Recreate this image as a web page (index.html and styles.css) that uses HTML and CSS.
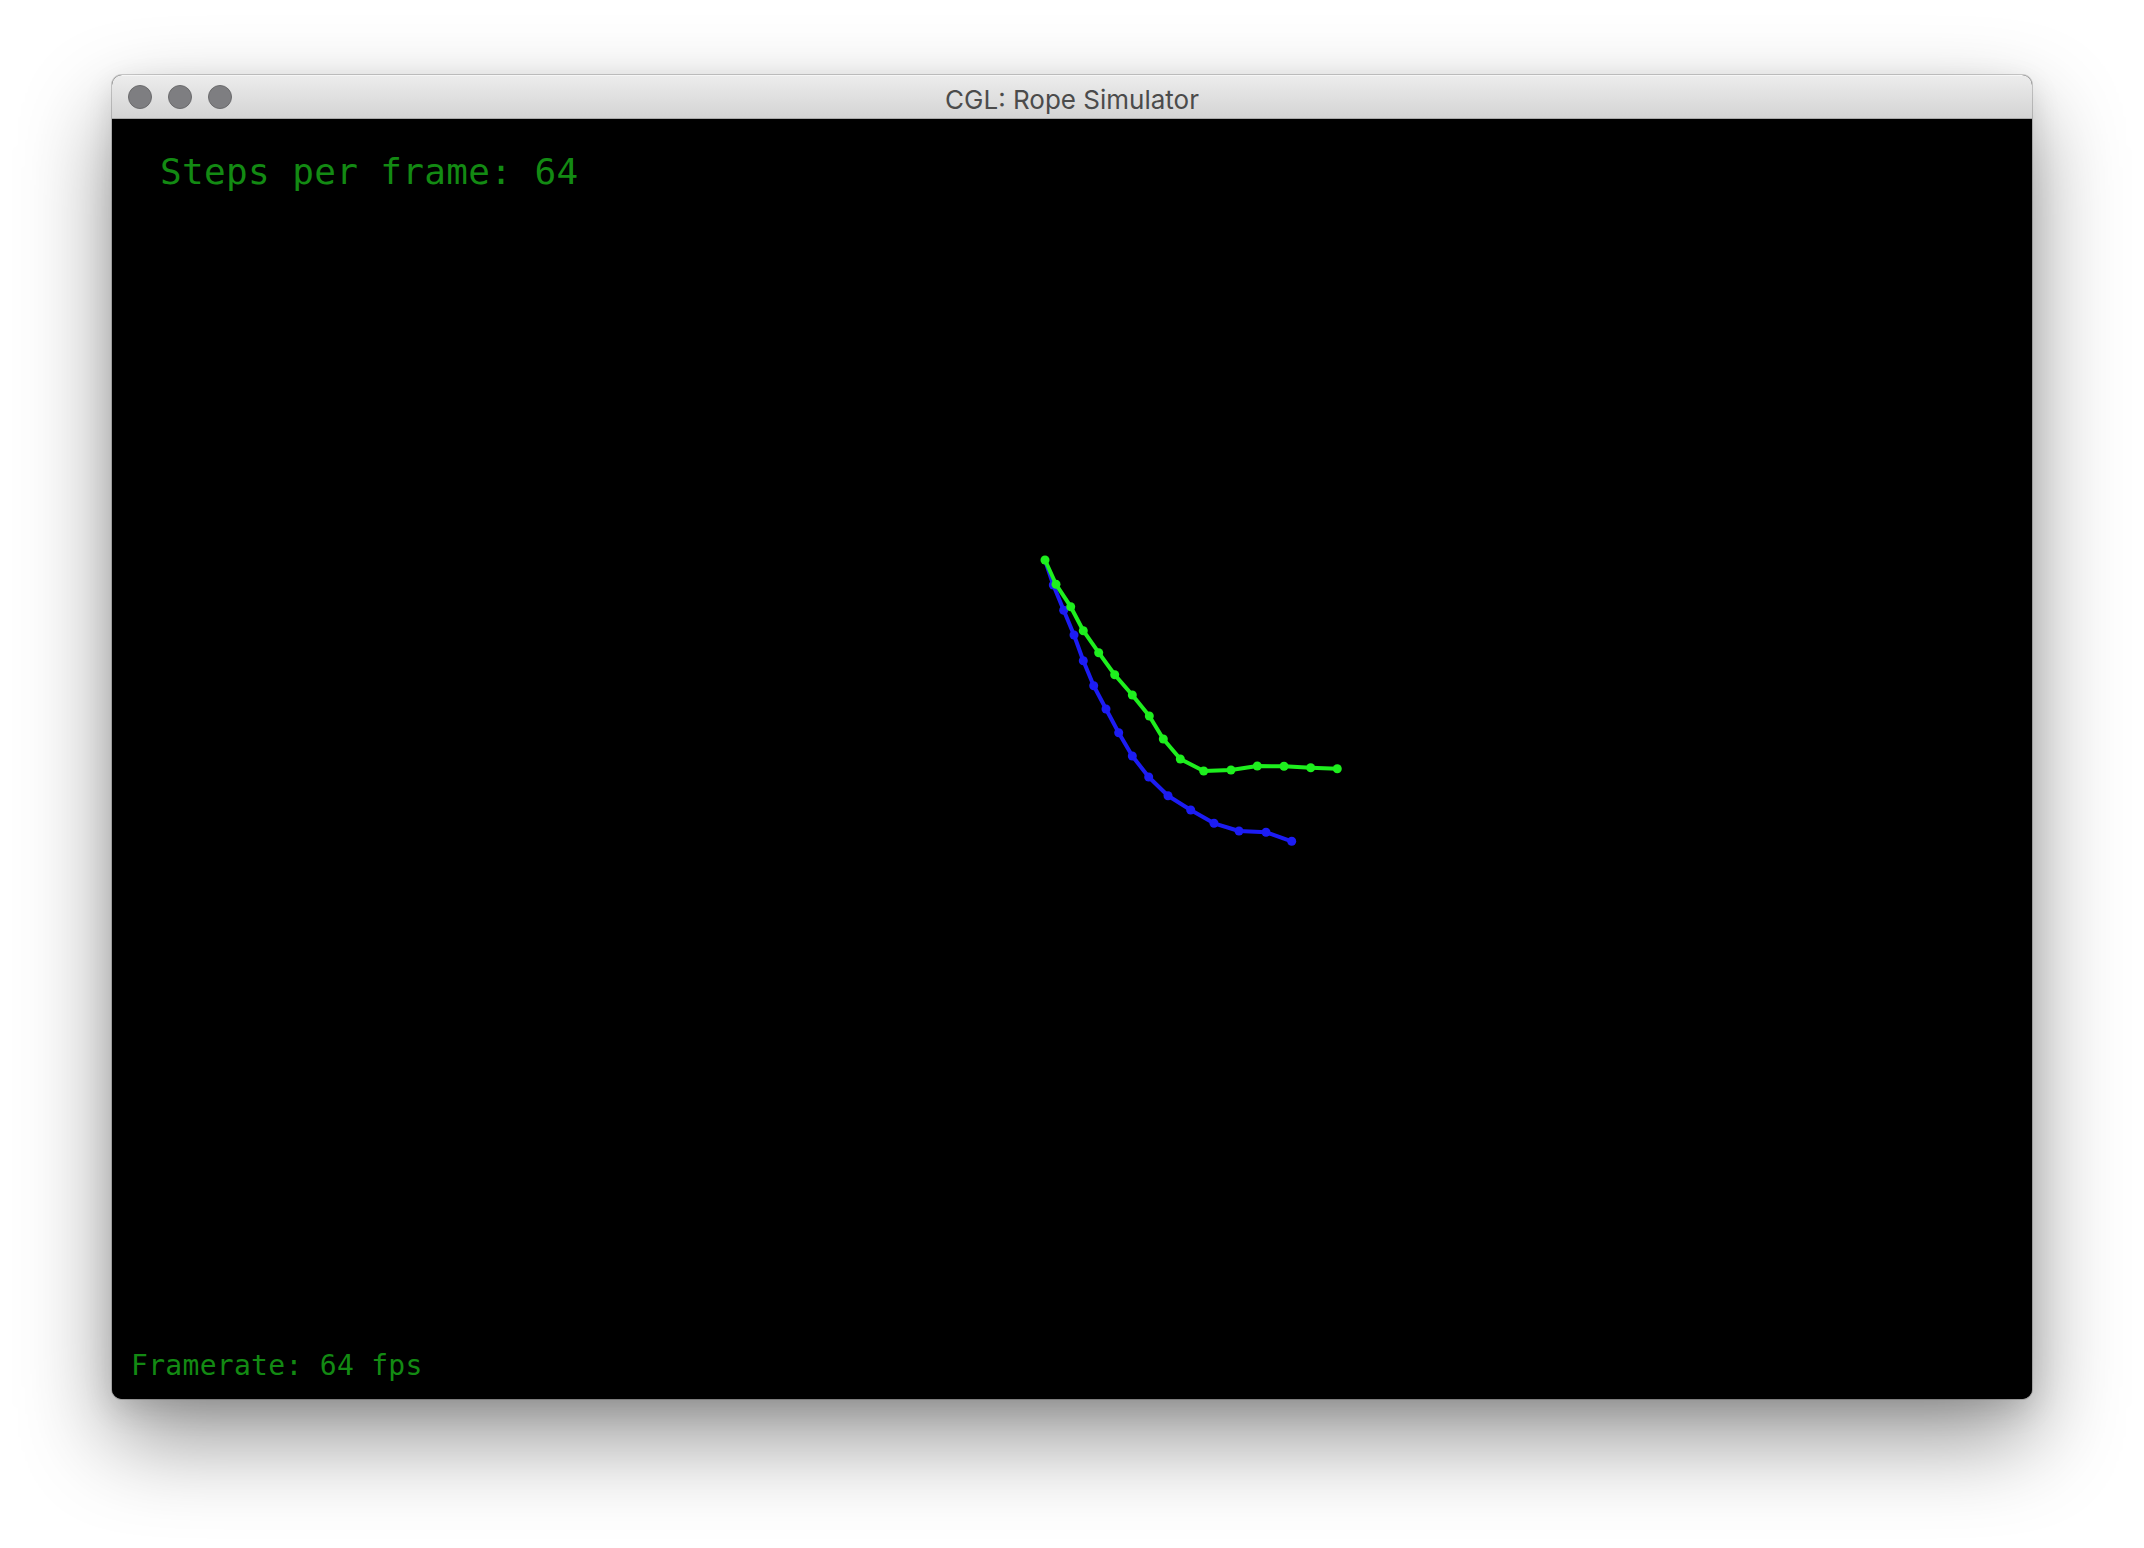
FILE: index.html
```html
<!DOCTYPE html>
<html>
<head>
<meta charset="utf-8">
<title>CGL: Rope Simulator</title>
<link rel="stylesheet" href="styles.css">
</head>
<body>
<div class="window">
  <div class="titlebar">
    <div class="lights">
      <span class="light"></span>
      <span class="light"></span>
      <span class="light"></span>
    </div>
    <div class="title">CGL: Rope Simulator</div>
  </div>
  <div class="viewport">
    <svg class="scene" width="1920" height="1280" viewBox="0 0 1920 1280" xmlns="http://www.w3.org/2000/svg">
      <g class="rope-blue">
        <polyline points="933,441 941.3,466 951.7,491.3 962,516 971.3,541.7 981.7,566.7 994,590 1006.7,613.7 1020.3,637 1036.7,658 1056,676.7 1078.7,691 1102,704.3 1127,712 1154,713.3 1179.7,722.3" fill="none" stroke="#1c1cf4" stroke-width="4" stroke-linejoin="round" stroke-linecap="round"/>
        <g fill="#1c1cf4">
          <circle cx="941.3" cy="466" r="4.5"/>
          <circle cx="951.7" cy="491.3" r="4.5"/>
          <circle cx="962" cy="516" r="4.5"/>
          <circle cx="971.3" cy="541.7" r="4.5"/>
          <circle cx="981.7" cy="566.7" r="4.5"/>
          <circle cx="994" cy="590" r="4.5"/>
          <circle cx="1006.7" cy="613.7" r="4.5"/>
          <circle cx="1020.3" cy="637" r="4.5"/>
          <circle cx="1036.7" cy="658" r="4.5"/>
          <circle cx="1056" cy="676.7" r="4.5"/>
          <circle cx="1078.7" cy="691" r="4.5"/>
          <circle cx="1102" cy="704.3" r="4.5"/>
          <circle cx="1127" cy="712" r="4.5"/>
          <circle cx="1154" cy="713.3" r="4.5"/>
          <circle cx="1179.7" cy="722.3" r="4.5"/>
        </g>
      </g>
      <g class="rope-green">
        <polyline points="933,441 944,465.3 958.7,487.7 971.3,511.7 986.7,533.7 1002.7,555.7 1020.3,576 1037.3,597 1051.3,620 1068.3,640 1091.7,652 1119,651 1145.3,647 1172,647.3 1198.7,648.7 1225.3,649.7" fill="none" stroke="#1eef1e" stroke-width="4" stroke-linejoin="round" stroke-linecap="round"/>
        <g fill="#1eef1e">
          <circle cx="933" cy="441" r="4.5"/>
          <circle cx="944" cy="465.3" r="4.5"/>
          <circle cx="958.7" cy="487.7" r="4.5"/>
          <circle cx="971.3" cy="511.7" r="4.5"/>
          <circle cx="986.7" cy="533.7" r="4.5"/>
          <circle cx="1002.7" cy="555.7" r="4.5"/>
          <circle cx="1020.3" cy="576" r="4.5"/>
          <circle cx="1037.3" cy="597" r="4.5"/>
          <circle cx="1051.3" cy="620" r="4.5"/>
          <circle cx="1068.3" cy="640" r="4.5"/>
          <circle cx="1091.7" cy="652" r="4.5"/>
          <circle cx="1119" cy="651" r="4.5"/>
          <circle cx="1145.3" cy="647" r="4.5"/>
          <circle cx="1172" cy="647.3" r="4.5"/>
          <circle cx="1198.7" cy="648.7" r="4.5"/>
          <circle cx="1225.3" cy="649.7" r="4.5"/>
        </g>
      </g>
    </svg>
    <div class="hud-top">Steps per frame: 64</div>
    <div class="hud-bottom">Framerate: 64 fps</div>
  </div>
</div>
</body>
</html>
```

FILE: styles.css
```css
html, body {
  margin: 0;
  padding: 0;
  background: #ffffff;
}

body {
  padding: 75px 112px 0 112px;
  height: 1548px;
  box-sizing: border-box;
  overflow: hidden;
}

.window {
  width: 1920px;
  border-radius: 10px;
  overflow: hidden;
  box-shadow: 0 0 0 1px rgba(0, 0, 0, 0.18), 0 40px 90px rgba(0, 0, 0, 0.42), 0 10px 30px rgba(0, 0, 0, 0.12);
  background: #000;
}

.titlebar {
  position: relative;
  height: 44px;
  box-sizing: border-box;
  background: linear-gradient(#ececec, #d4d4d4);
  border-top: 1px solid #f6f6f6;
  border-bottom: 1px solid #a9a9a9;
  display: flex;
  align-items: center;
  justify-content: center;
}

.lights {
  position: absolute;
  left: 16px;
  top: 0;
  bottom: 0;
  display: flex;
  align-items: center;
  gap: 16px;
}

.light {
  width: 24px;
  height: 24px;
  border-radius: 50%;
  box-sizing: border-box;
  background: #7e7e81;
  border: 1px solid #6b6b6d;
}

.title {
  font-family: "Inter", "Liberation Sans", sans-serif;
  font-size: 26px;
  color: #4b4b4b;
  line-height: 1;
  padding-top: 5px;
}

.viewport {
  position: relative;
  height: 1280px;
  background: #000;
  display: flex;
  flex-direction: column;
  justify-content: space-between;
  font-family: "DejaVu Sans Mono", "Liberation Mono", monospace;
  color: #138a13;
}

.scene {
  position: absolute;
  left: 0;
  top: 0;
}

.hud-top {
  position: relative;
  font-size: 36px;
  line-height: 36px;
  letter-spacing: 0.35px;
  padding: 35px 0 0 48px;
}

.hud-bottom {
  position: relative;
  font-size: 28px;
  line-height: 28px;
  letter-spacing: 0.3px;
  padding: 0 0 19px 19px;
}
```
